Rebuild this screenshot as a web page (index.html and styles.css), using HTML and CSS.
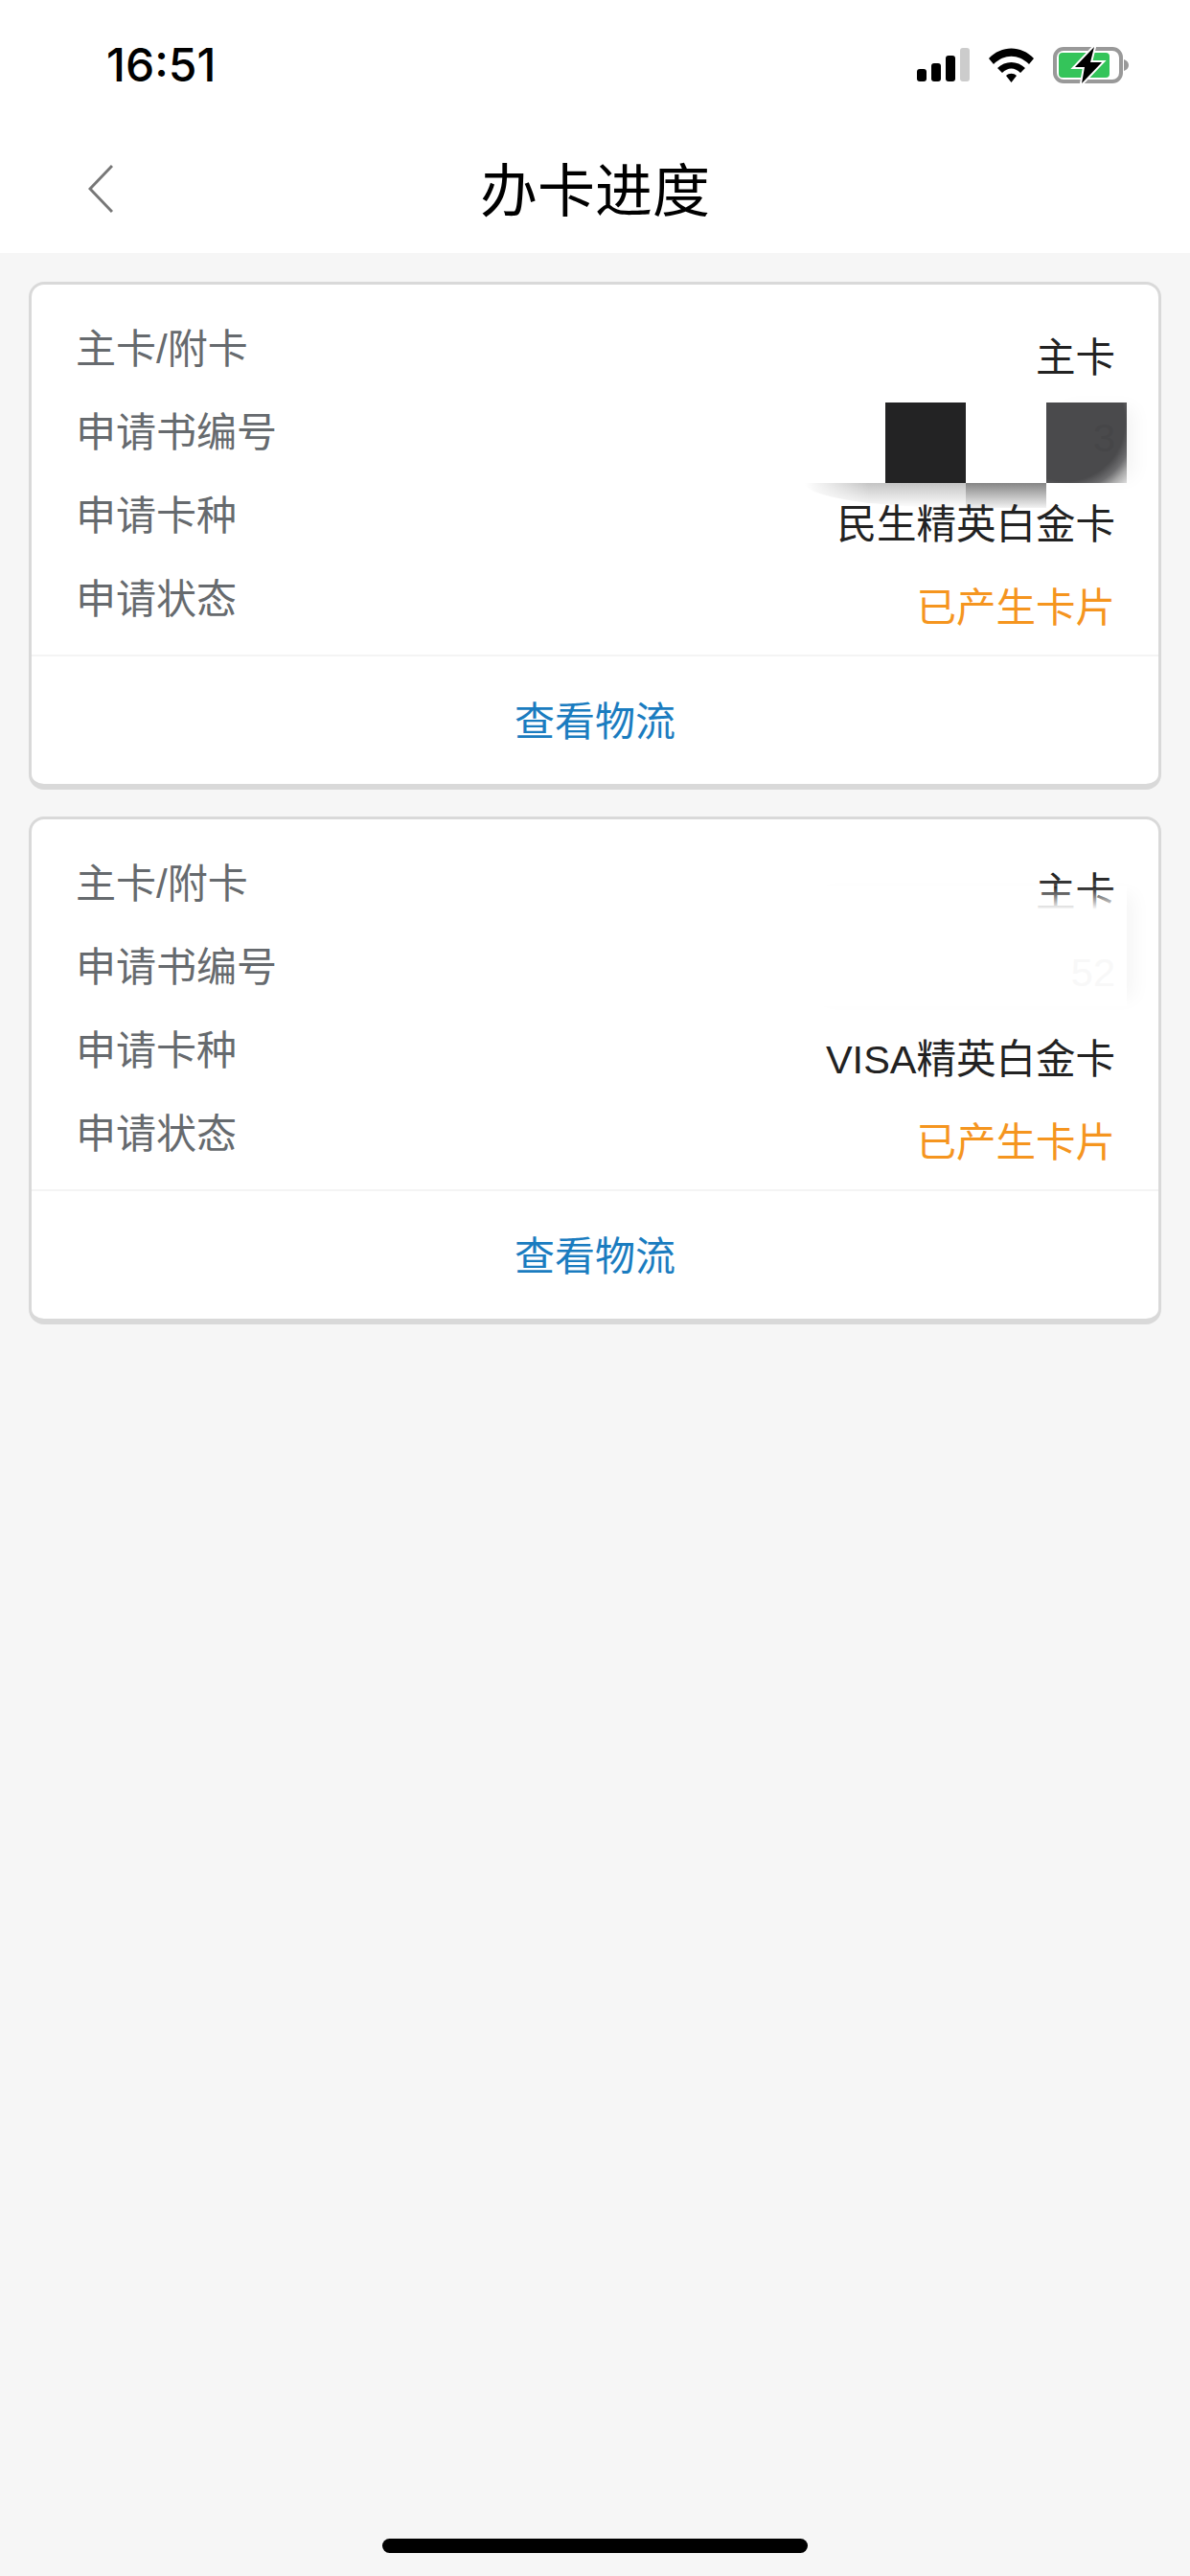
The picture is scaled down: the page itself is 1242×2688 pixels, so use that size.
FILE: index.html
```html
<!DOCTYPE html>
<html lang="zh-CN">
<head>
<meta charset="UTF-8">
<meta name="viewport" content="width=device-width, initial-scale=1.0">
<title>办卡进度</title>
<link rel="stylesheet" href="styles.css">
</head>
<body>
<header class="header">
    <div class="status-bar">
        <span class="time">16:51</span>
        <div class="status-icons">
            <svg width="55" height="35" viewBox="0 0 55 35">
                <rect x="0" y="22" width="10" height="13" rx="3" fill="#000"/>
                <rect x="15" y="16" width="10" height="19" rx="3" fill="#000"/>
                <rect x="30" y="8" width="10" height="27" rx="3" fill="#000"/>
                <rect x="45" y="0" width="10" height="35" rx="3" fill="#ccc"/>
            </svg>
            <svg width="47" height="36" viewBox="0 0 47 36">
                <path d="M0 11 C13 -3 34 -3 47 11 L42 17 C31 6 16 6 5 17 Z" fill="#000"/>
                <path d="M9 21 C17 13 30 13 38 21 L33 26 C27 20 20 20 14 26 Z" fill="#000"/>
                <path d="M18 29 C21 26 26 26 29 29 L23.5 36 Z" fill="#000"/>
            </svg>
            <svg width="79" height="38" viewBox="0 0 79 38">
                <rect x="2" y="2" width="69" height="34" rx="9" fill="#fff" stroke="#999" stroke-width="4"/>
                <rect x="6" y="6" width="53" height="26" rx="4" fill="#34c45a"/>
                <path d="M74 13 C77 14 79 16 79 19 C79 22 77 24 74 25 Z" fill="#999"/>
                <path d="M43 0 L23 21 L33 21 L30 38 L51 16 L39 16 Z" fill="#000" stroke="#fff" stroke-width="4" paint-order="stroke"/>
            </svg>
        </div>
    </div>
    <div class="nav-bar">
        <svg class="back" width="26" height="52" viewBox="0 0 26 52">
            <path d="M25 2 L2 26 L25 50" fill="none" stroke="#777" stroke-width="3"/>
        </svg>
        <h1 class="title">办卡进度</h1>
    </div>
</header>

<main class="list">
    <section class="card">
        <div class="rows">
            <div class="row">
                <span class="label">主卡/附卡</span>
                <span class="value">主卡</span>
            </div>
            <div class="row">
                <span class="label">申请书编号</span>
                <div class="mask-dark"></div>
                <div class="mask-gray"></div>
                <div class="mask-fade"></div>
                <div class="mask-shade"></div>
                <span class="value value-hidden-dark">3</span>
            </div>
            <div class="row">
                <span class="label">申请卡种</span>
                <span class="value">民生精英白金卡</span>
            </div>
            <div class="row">
                <span class="label">申请状态</span>
                <span class="value value-orange">已产生卡片</span>
            </div>
        </div>
        <a class="card-link">查看物流</a>
    </section>

    <section class="card">
        <div class="rows">
            <div class="row">
                <span class="label">主卡/附卡</span>
                <span class="value">主卡</span>
            </div>
            <div class="row">
                <span class="label">申请书编号</span>
                <div class="mask-white"></div>
                <span class="value value-hidden-light">52</span>
            </div>
            <div class="row">
                <span class="label">申请卡种</span>
                <span class="value">VISA精英白金卡</span>
            </div>
            <div class="row">
                <span class="label">申请状态</span>
                <span class="value value-orange">已产生卡片</span>
            </div>
        </div>
        <a class="card-link">查看物流</a>
    </section>
</main>

<div class="home-bar"></div>
</body>
</html>
```

FILE: styles.css
```css
* {
    box-sizing: border-box;
}

body {
    display: flex;
    flex-direction: column;
    width: 1242px;
    height: 2688px;
    margin: 0;
    overflow: hidden;
    font-family: "Liberation Sans", "Noto Sans CJK SC", sans-serif;
    background-color: #f6f6f6;
}

.header {
    height: 264px;
    background-color: #fff;
}

.status-bar {
    display: flex;
    justify-content: space-between;
    align-items: center;
    height: 135px;
    padding: 0 64px 0 111px;
}

.time {
    font-family: Inter, sans-serif;
    font-size: 48px;
    font-weight: 550;
    color: #000;
}

.status-icons {
    display: flex;
    align-items: center;
    gap: 20px;
}

.nav-bar {
    position: relative;
    display: flex;
    justify-content: center;
    align-items: center;
    height: 118px;
}

.back {
    position: absolute;
    left: 92px;
    top: 36px;
}

.title {
    margin: 0;
    font-size: 60px;
    font-weight: 400;
    color: #000;
}

.list {
    display: flex;
    flex-direction: column;
    gap: 28px;
    padding: 30px 30px 0;
}

.card {
    border: 3px solid #d9d9d9;
    border-bottom-width: 6px;
    border-radius: 16px;
    background-color: #fff;
}

.rows {
    padding: 20px 45px 18px 46px;
    border-bottom: 2px solid #f4f4f4;
}

.row {
    position: relative;
    display: flex;
    justify-content: space-between;
    align-items: center;
    height: 87px;
    font-size: 42px;
}

.label {
    color: #666a6e;
}

.value {
    position: relative;
    margin-top: 18px;
    font-size: 41.5px;
    color: #222;
}

.value-orange {
    color: #f5951f;
}

.value-hidden-dark {
    color: #464648;
}

.value-hidden-light {
    color: #f8f8f8;
}

.card-link {
    display: block;
    height: 133px;
    line-height: 137px;
    font-size: 42px;
    text-align: center;
    color: #1a7cc0;
}

/* blocks covering the application number */
.mask-dark,
.mask-gray {
    position: absolute;
    top: 16px;
    width: 84px;
    height: 84px;
}

.mask-dark {
    right: 156px;
    background-color: #232324;
}

.mask-gray {
    right: -12px;
    background: radial-gradient(circle 84px at 20px 20px, #4a4a4c 74%, #6d6d6f 86%, #aaa 96%, #ddd 108%);
    box-shadow: 14px 0 18px -6px #f4f4f4;
}

.mask-fade {
    position: absolute;
    top: 100px;
    right: 72px;
    width: 84px;
    height: 26px;
    background: linear-gradient(#858585, #f2f2f2);
}

.mask-shade {
    position: absolute;
    top: 100px;
    right: 156px;
    width: 168px;
    height: 26px;
    border-bottom-left-radius: 100% 100%;
    background: linear-gradient(to right, #fff, rgba(255, 255, 255, 0) 40%), linear-gradient(#c4c4c4, #fff);
}

.mask-white {
    position: absolute;
    top: -37px;
    right: -12px;
    width: 340px;
    height: 125px;
    background: linear-gradient(rgba(255, 255, 255, 0), #fff 24px);
    box-shadow: 16px 0 18px -8px #f6f6f6;
}

.home-bar {
    width: 444px;
    height: 15px;
    margin: auto auto 24px;
    border-radius: 8px;
    background-color: #000;
}
```
